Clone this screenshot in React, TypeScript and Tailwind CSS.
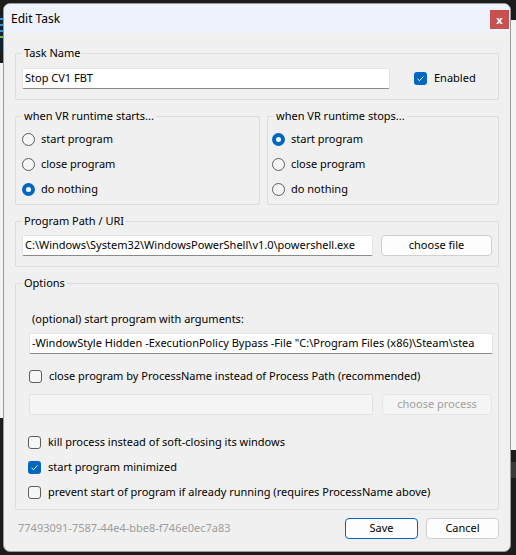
import React from "react";

function Group({ title, className = "", children }: { title: string; className?: string; children: React.ReactNode }) {
  return (
    <fieldset className={"border border-[#dcdcdc] rounded-[2px] " + className}>
      <legend className="ml-[6px] px-[2px] h-[16px] leading-[16px]">{title}</legend>
      {children}
    </fieldset>
  );
}

function Radio({ checked, label }: { checked?: boolean; label: string }) {
  return (
    <div className="flex items-center h-[25px] gap-[6px]">
      {checked ? (
        <span className="w-[13px] h-[13px] rounded-full bg-[#0067c0] flex items-center justify-center">
          <span className="w-[5px] h-[5px] rounded-full bg-white" />
        </span>
      ) : (
        <span className="w-[13px] h-[13px] rounded-full border border-[#5d5d5d] bg-[#f5f5f5]" />
      )}
      <span>{label}</span>
    </div>
  );
}

function Check({ checked, label, className = "" }: { checked?: boolean; label: string; className?: string }) {
  return (
    <div className={"flex items-center gap-[7px] " + className}>
      {checked ? (
        <span className="w-[13px] h-[13px] rounded-[3px] bg-[#0067c0] flex items-center justify-center">
          <svg width="13" height="13" viewBox="0 0 13 13">
            <path d="M3.6 6.9 L5.5 8.7 L9.4 4.5" fill="none" stroke="white" strokeWidth="1" />
          </svg>
        </span>
      ) : (
        <span className="w-[13px] h-[13px] rounded-[3px] border border-[#5d5d5d] bg-[#f6f6f6]" />
      )}
      <span>{label}</span>
    </div>
  );
}

function TextBox({ value, className = "" }: { value: string; className?: string }) {
  return (
    <div className={"h-[21px] bg-white border border-[#e4e4e4] border-b-[#8a8a8a] rounded-[2px] pl-[2px] flex items-center overflow-hidden whitespace-nowrap " + className}>
      {value}
    </div>
  );
}

function Button({ label, primary, disabled, className = "" }: { label: string; primary?: boolean; disabled?: boolean; className?: string }) {
  const look = disabled
    ? "bg-[#f5f5f5] border-[#e5e5e5] text-[#a0a0a0]"
    : primary
    ? "bg-[#fdfdfd] border-[#0067c0]"
    : "bg-[#fdfdfd] border-[#d0d0d0]";
  return (
    <button className={"h-[21px] border rounded-[4px] flex items-center justify-center " + look + " " + className}>
      {label}
    </button>
  );
}

export default function App() {
  return (
    <div className="w-[516px] h-[555px] bg-[#1c1c1c] flex overflow-hidden font-['Segoe_UI','Noto_Sans',sans-serif] text-[11px] text-black">
      {/* desktop behind the dialog */}
      <div className="w-[3px] flex flex-col">
        <div className="h-[15px]" />
        <div className="h-[36px] bg-[#123] flex flex-col gap-[4px] py-[3px]">
          <div className="h-[2px] bg-[#3b8fd6]" />
          <div className="h-[2px] bg-[#3b8fd6]" />
          <div className="h-[2px] bg-[#3b8fd6]" />
          <div className="h-[2px] bg-[#6bbf5a]" />
        </div>
        <div className="h-[12px]" />
        <div className="h-[355px] bg-[#f3f3f3]" />
      </div>

      <div className="w-[508px] mt-[3px] h-[549px] bg-[#f0f0f0] border border-[#9a9a9a] rounded-[7px] overflow-hidden flex flex-col">
        <div className="h-[29px] bg-[#eef2fa] flex items-start justify-between">
          <span className="pl-[7px] pt-[6px] text-[12px]">Edit Task</span>
          <button className="mt-[6px] mr-[1px] w-[19px] h-[19px] bg-[#c75050] text-white text-[11px] font-bold leading-none flex items-center justify-center">
            x
          </button>
        </div>

        <div className="px-[11px] pt-[12px] flex flex-col">
          <Group title="Task Name">
            <div className="pt-[7px] pb-[10px] pl-[6px] flex items-center">
              <TextBox value="Stop CV1 FBT" className="w-[368px]" />
              <Check checked label="Enabled" className="ml-[24px] gap-[5px]" />
            </div>
          </Group>

          <div className="mt-[8px] flex gap-[7px]">
            <Group title="when VR runtime starts..." className="w-[245px]">
              <div className="pt-[3px] pb-[2px] pl-[6px]">
                <Radio label="start program" />
                <Radio label="close program" />
                <Radio checked label="do nothing" />
              </div>
            </Group>
            <Group title="when VR runtime stops..." className="flex-1">
              <div className="pt-[3px] pb-[2px] pl-[4px]">
                <Radio checked label="start program" />
                <Radio label="close program" />
                <Radio label="do nothing" />
              </div>
            </Group>
          </div>

          <Group title="Program Path / URI" className="mt-[8px]">
            <div className="pt-[6px] pb-[10px] pl-[6px] flex items-center">
              <TextBox value="C:\Windows\System32\WindowsPowerShell\v1.0\powershell.exe" className="w-[351px]" />
              <Button label="choose file" className="ml-[8px] w-[111px]" />
            </div>
          </Group>

          <Group title="Options" className="mt-[8px]">
            <div className="pt-[20px] pb-[4px] pl-[13px] pr-[5px] flex flex-col">
              <div className="h-[16px] leading-[16px] pl-[3px]">(optional) start program with arguments:</div>
              <TextBox
                value={'-WindowStyle Hidden -ExecutionPolicy Bypass -File "C:\\Program Files (x86)\\Steam\\stea'}
                className="mt-[6px] w-full"
              />
              <Check label="close program by ProcessName instead of Process Path (recommended)" className="mt-[11px] h-[22px]" />
              <div className="mt-[7px] flex">
                <div className="w-[344px] h-[21px] bg-[#f5f5f5] border border-[#e2e2e2] rounded-[2px]" />
                <Button label="choose process" disabled className="ml-[9px] w-[110px]" />
              </div>
              <div className="mt-[15px] -ml-px flex flex-col">
                <Check label="kill process instead of soft-closing its windows" className="h-[25px]" />
                <Check checked label="start program minimized" className="h-[25px]" />
                <Check label="prevent start of program if already running (requires ProcessName above)" className="h-[25px]" />
              </div>
            </div>
          </Group>

          <div className="mt-[8px] flex items-center">
            <span className="pl-[3px] text-[#9d9d9d]">77493091-7587-44e4-bbe8-f746e0ec7a83</span>
            <Button label="Save" primary className="ml-auto w-[73px]" />
            <Button label="Cancel" className="ml-[8px] w-[73px]" />
          </div>
        </div>
      </div>

      <div className="w-[5px] flex flex-col">
        <div className="h-[20px]" />
        <div className="h-[430px] bg-[#f3f3f3]" />
        <div className="h-[12px]" />
        <div className="h-[16px] bg-[#3a3a3a]" />
      </div>
    </div>
  );
}
